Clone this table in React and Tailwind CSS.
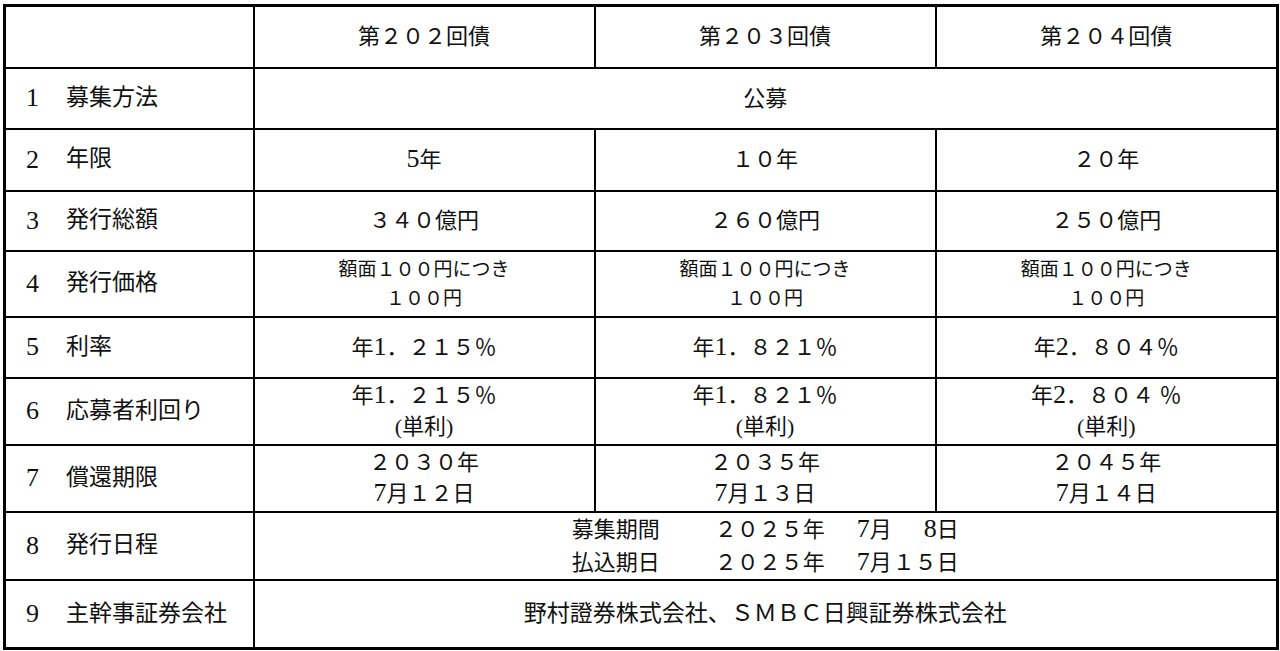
import React from "react";

const font = { fontFamily: '"Liberation Serif", "Noto Sans CJK JP", serif' };

function H({ children }) {
  return <span className="text-[26px] leading-none">{children}</span>;
}

function Label({ n, text }) {
  return (
    <td className="border-2 border-black pl-[20px] text-[23px]">
      <div className="flex items-center">
        <span className="w-[40px] text-[26px] leading-none">{n}</span>
        <span>{text}</span>
      </div>
    </td>
  );
}

function C({ children, className = "" }) {
  return <td className={"border-2 border-black text-center " + className}>{children}</td>;
}

function Two({ a, b }) {
  return (
    <C className="text-[22px] leading-[31px]">
      <div>{a}</div>
      <div>{b}</div>
    </C>
  );
}

export default function App() {
  return (
    <div className="w-[1280px] h-[651px] bg-white pt-[4px] pl-[3px] text-[#111]" style={font}>
      <table className="border-collapse border-[3px] border-black table-fixed w-[1274px]">
        <colgroup>
          <col className="w-[249px]" />
          <col className="w-[341px]" />
          <col className="w-[341px]" />
          <col className="w-[342px]" />
        </colgroup>
        <tbody>
          <tr className="h-[62px]">
            <td className="border-2 border-black"></td>
            <C className="text-[22px]">第２０２回債</C>
            <C className="text-[22px]">第２０３回債</C>
            <C className="text-[22px]">第２０４回債</C>
          </tr>
          <tr className="h-[61px]">
            <Label n="1" text="募集方法" />
            <td colSpan={3} className="border-2 border-black text-center text-[22px]">公募</td>
          </tr>
          <tr className="h-[62px]">
            <Label n="2" text="年限" />
            <C className="text-[22px]"><H>5</H>年</C>
            <C className="text-[22px]">１０年</C>
            <C className="text-[22px]">２０年</C>
          </tr>
          <tr className="h-[60px]">
            <Label n="3" text="発行総額" />
            <C className="text-[22px]">３４０億円</C>
            <C className="text-[22px]">２６０億円</C>
            <C className="text-[22px]">２５０億円</C>
          </tr>
          <tr className="h-[66px]">
            <Label n="4" text="発行価格" />
            {[0, 1, 2].map((i) => (
              <C key={i} className="text-[19px] leading-[29px]">
                <div>額面１００円につき</div>
                <div>１００円</div>
              </C>
            ))}
          </tr>
          <tr className="h-[61px]">
            <Label n="5" text="利率" />
            <C className="text-[22px]">年<H>1</H>．２１５％</C>
            <C className="text-[22px]">年<H>1</H>．８２１％</C>
            <C className="text-[22px]">年<H>2</H>．８０４％</C>
          </tr>
          <tr className="h-[67px]">
            <Label n="6" text="応募者利回り" />
            <Two a={<>年<H>1</H>．２１５％</>} b="(単利)" />
            <Two a={<>年<H>1</H>．８２１％</>} b="(単利)" />
            <Two a={<>年<H>2</H>．８０４ ％</>} b="(単利)" />
          </tr>
          <tr className="h-[67px]">
            <Label n="7" text="償還期限" />
            <Two a="２０３０年" b={<><H>7</H>月１２日</>} />
            <Two a="２０３５年" b={<><H>7</H>月１３日</>} />
            <Two a="２０４５年" b={<><H>7</H>月１４日</>} />
          </tr>
          <tr className="h-[65px]">
            <Label n="8" text="発行日程" />
            <td colSpan={3} className="border-2 border-black text-[22px] leading-[33px]">
              <div className="flex justify-center">
                <div className="grid grid-cols-[143px_110px_67px_67px]">
                  <div>募集期間</div>
                  <div>２０２５年</div>
                  <div className="text-right"><H>7</H>月</div>
                  <div className="text-right"><H>8</H>日</div>
                  <div>払込期日</div>
                  <div>２０２５年</div>
                  <div className="text-right"><H>7</H>月</div>
                  <div className="text-right">１５日</div>
                </div>
              </div>
            </td>
          </tr>
          <tr className="h-[69px]">
            <Label n="9" text="主幹事証券会社" />
            <td colSpan={3} className="border-2 border-black text-center text-[23px]">
              野村證券株式会社、ＳＭＢＣ日興証券株式会社
            </td>
          </tr>
        </tbody>
      </table>
    </div>
  );
}
